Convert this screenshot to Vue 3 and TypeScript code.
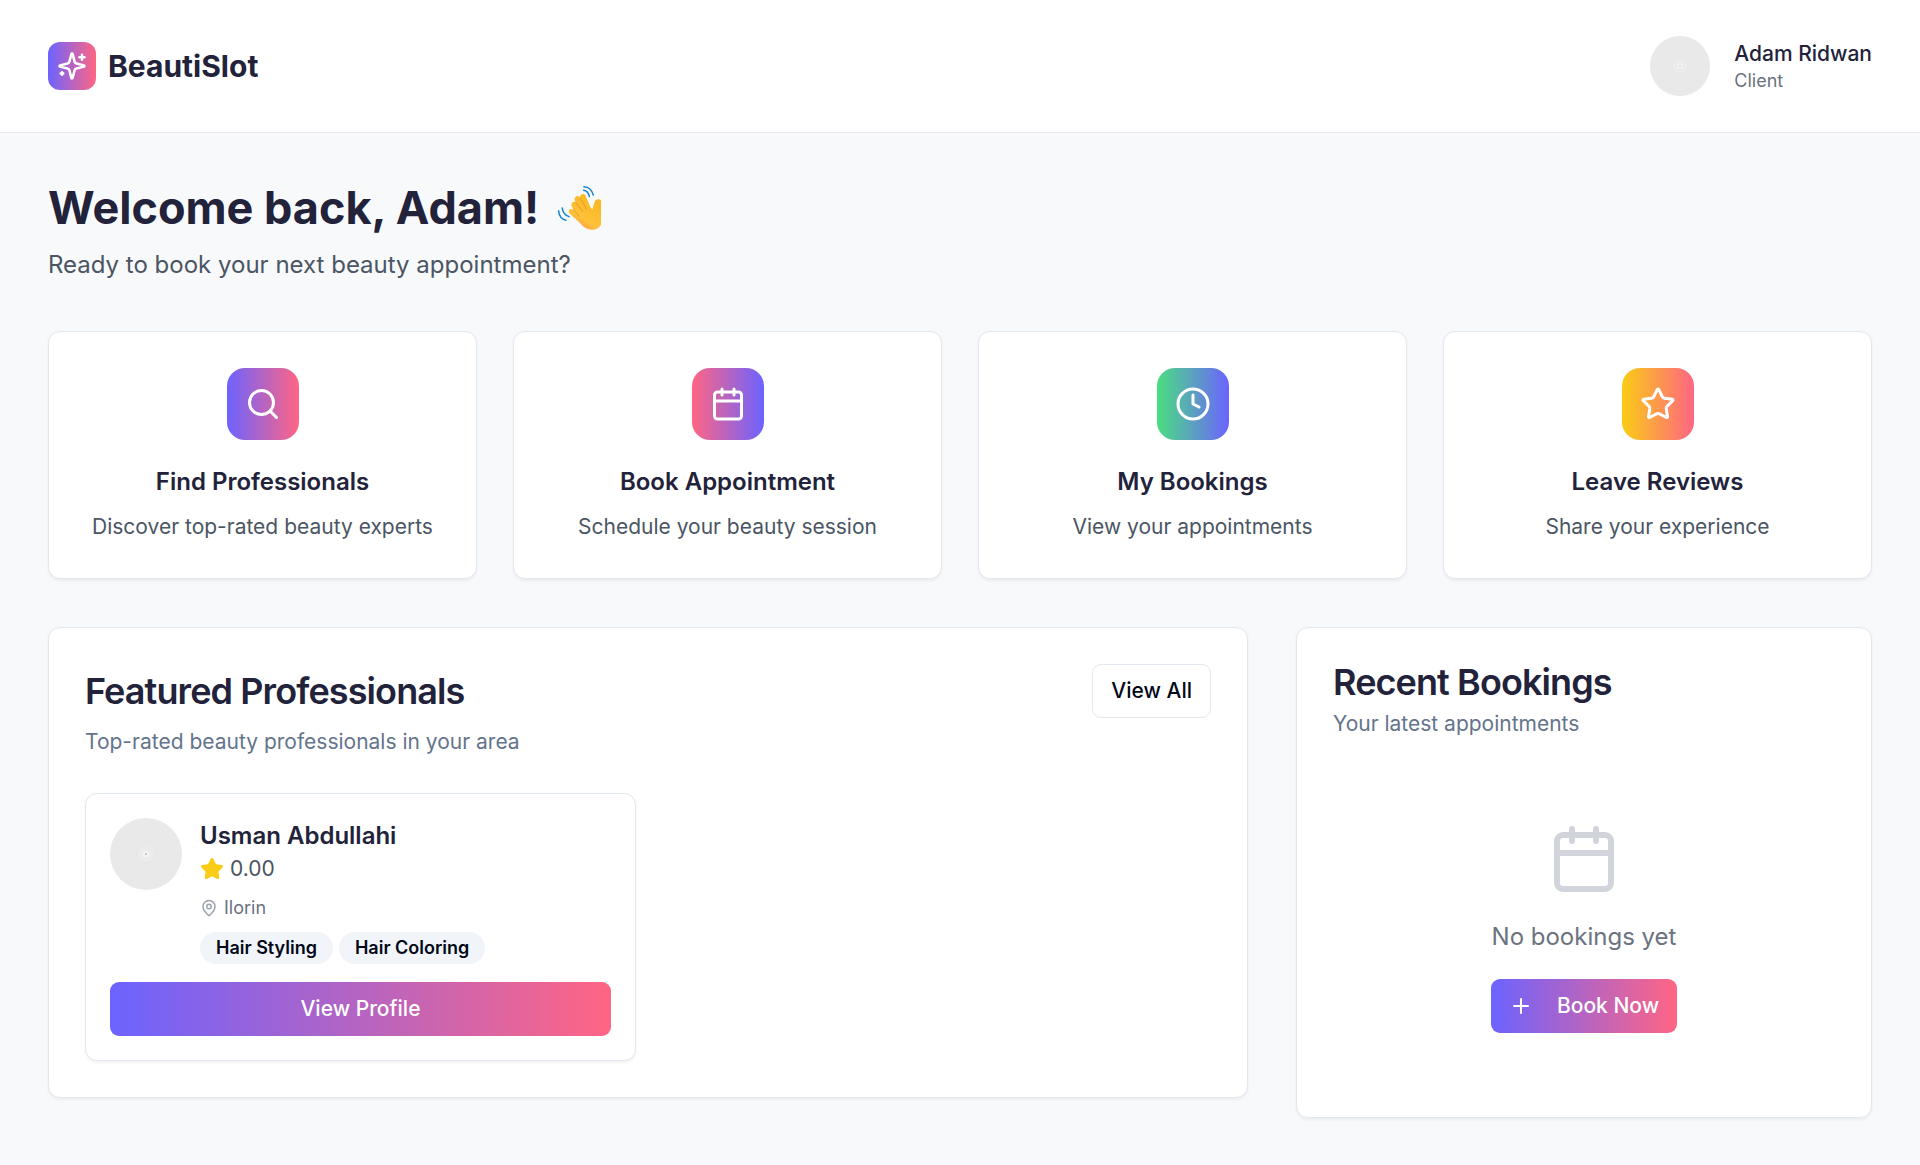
<script setup lang="ts">
type IconName = 'search' | 'calendar' | 'clock' | 'star'

interface Action {
  title: string
  text: string
  icon: IconName
  tone: string
}

const actions: Action[] = [
  { title: 'Find Professionals', text: 'Discover top-rated beauty experts', icon: 'search', tone: 'primary' },
  { title: 'Book Appointment', text: 'Schedule your beauty session', icon: 'calendar', tone: 'reverse' },
  { title: 'My Bookings', text: 'View your appointments', icon: 'clock', tone: 'green' },
  { title: 'Leave Reviews', text: 'Share your experience', icon: 'star', tone: 'yellow' },
]

const starPath =
  'M11.525 2.295a.53.53 0 0 1 .95 0l2.31 4.679a2.123 2.123 0 0 0 1.595 1.16l5.166.756a.53.53 0 0 1 .294.904l-3.736 3.638a2.123 2.123 0 0 0-.611 1.878l.882 5.14a.53.53 0 0 1-.771.56l-4.618-2.428a2.122 2.122 0 0 0-1.973 0L6.396 21.01a.53.53 0 0 1-.77-.56l.881-5.139a2.122 2.122 0 0 0-.611-1.879L2.16 9.795a.53.53 0 0 1 .294-.906l5.165-.755a2.122 2.122 0 0 0 1.597-1.16z'

const icons: Record<IconName, string[]> = {
  search: ['M3 11a8 8 0 1 0 16 0a8 8 0 1 0-16 0', 'm21 21-4.3-4.3'],
  calendar: [
    'M8 2v4',
    'M16 2v4',
    'M5 4h14a2 2 0 0 1 2 2v14a2 2 0 0 1-2 2H5a2 2 0 0 1-2-2V6a2 2 0 0 1 2-2z',
    'M3 10h18',
  ],
  clock: ['M2 12a10 10 0 1 0 20 0a10 10 0 1 0-20 0', 'M12 6v6l4 2'],
  star: [starPath],
}

const services: string[] = ['Hair Styling', 'Hair Coloring']
</script>

<template>
  <div class="page">
    <header class="topbar">
      <div class="brand">
        <span class="logo primary">
          <svg class="icon logo-icon" viewBox="0 0 24 24">
            <path d="M9.937 15.5A2 2 0 0 0 8.5 14.063l-6.135-1.582a.5.5 0 0 1 0-.962L8.5 9.936A2 2 0 0 0 9.937 8.5l1.582-6.135a.5.5 0 0 1 .963 0L14.063 8.5A2 2 0 0 0 15.5 9.937l6.135 1.581a.5.5 0 0 1 0 .964L15.5 14.063a2 2 0 0 0-1.437 1.437l-1.582 6.135a.5.5 0 0 1-.963 0z" />
            <path d="M20 3v4" />
            <path d="M22 5h-4" />
            <path d="M4 17v2" />
            <path d="M5 18H3" />
          </svg>
        </span>
        <span class="brand-name">BeautiSlot</span>
      </div>
      <div class="user">
        <svg class="avatar small" viewBox="0 0 60 60">
          <circle cx="30" cy="30" r="30" fill="#e9e9e9" />
          <circle cx="30" cy="30" r="6.5" fill="#ececec" />
          <circle cx="30" cy="30" r="2.6" fill="#f4f4f4" />
          <circle cx="30" cy="30" r="0.8" fill="#c4c4c4" />
        </svg>
        <div>
          <div class="user-name">Adam Ridwan</div>
          <div class="user-role">Client</div>
        </div>
      </div>
    </header>

    <main class="main">
      <h1 class="welcome">
        <span>Welcome back, Adam!</span>
        <svg class="wave" viewBox="0 0 44 46" role="img" aria-label="Waving hand">
          <defs>
            <linearGradient id="skin" x1="0.75" y1="0.2" x2="0.3" y2="1">
              <stop offset="0" stop-color="#f9b924" />
              <stop offset="0.65" stop-color="#ffc23a" />
              <stop offset="1" stop-color="#fb9149" />
            </linearGradient>
          </defs>
          <path
            fill="url(#skin)"
            d="M12.5 24.5c1.300-1 2.600-.6 4 .4l-1.600-3.400c-1-2 -.4-3.800 1-4.500 1-.5 2-.2 2.800.6l-.8-1.900c-.8-2 0-3.900 1.600-4.500 1.500-.6 2.800.1 3.600 1.500-.3-1.600.4-2.900 1.800-3.400 1.800-.6 3.300.3 4 2.100l4.500 10.600 1.900 2.400 1.800-6.200c.6-2.400 2-3.900 4.200-3.900 2.500 0 4.200 1.500 4.200 4.200V33c0 7.500-4.300 11.800-10.500 11.800-4.500 0-8.500-2.200-11.500-6.200L12.800 28.500c-1.200-1.500-1.500-2.800-.3-4z"
          />
          <path class="finger" d="m16.500 24.800 5.600 6.400M18.700 17.600l7 9M23.200 13l6.500 11.500" />
          <path class="motion" d="M26.900 1.700c4.700.2 8.100 3.400 9.400 8.400M26.500 5.200c3.200.4 5.200 2.700 5.800 6.300M5.200 22.900c.5 4.200 3 7.600 6.900 8.700M1.600 25.700c.4 4.700 3.100 8.500 7.300 9.500" />
        </svg>
      </h1>
      <p class="lead">Ready to book your next beauty appointment?</p>

      <section class="actions">
        <article v-for="action in actions" :key="action.title" class="card action">
          <span class="tile" :class="action.tone">
            <svg class="icon tile-icon" viewBox="0 0 24 24">
              <path v-for="d in icons[action.icon]" :key="d" :d="d" />
            </svg>
          </span>
          <h3 class="action-title">{{ action.title }}</h3>
          <p class="action-text">{{ action.text }}</p>
        </article>
      </section>

      <section class="columns">
        <article class="card panel">
          <div class="panel-head">
            <h2 class="panel-title">Featured Professionals</h2>
            <button class="button outline" type="button">View All</button>
          </div>
          <p class="panel-text">Top-rated beauty professionals in your area</p>
          <div class="pros">
            <div class="card pro">
              <div class="pro-body">
                <svg class="avatar large" viewBox="0 0 72 72">
                  <circle cx="36" cy="36" r="36" fill="#e9e9e9" />
                  <circle cx="36" cy="36" r="7.8" fill="#ececec" />
                  <circle cx="36" cy="36" r="3.1" fill="#f5f5f5" />
                  <circle cx="36" cy="36" r="1" fill="#b8b8b8" />
                </svg>
                <div>
                  <h3 class="pro-name">Usman Abdullahi</h3>
                  <div class="rating">
                    <svg class="icon rating-icon" viewBox="0 0 24 24"><path :d="starPath" /></svg>
                    <span>0.00</span>
                  </div>
                  <div class="place">
                    <svg class="icon place-icon" viewBox="0 0 24 24">
                      <path d="M20 10c0 4.993-5.539 10.193-7.399 11.799a1 1 0 0 1-1.202 0C9.539 20.193 4 14.993 4 10a8 8 0 0 1 16 0" />
                      <circle cx="12" cy="10" r="3" />
                    </svg>
                    <span>Ilorin</span>
                  </div>
                  <div class="badges">
                    <span v-for="service in services" :key="service" class="badge">{{ service }}</span>
                  </div>
                </div>
              </div>
              <button class="button primary wide" type="button">View Profile</button>
            </div>
          </div>
        </article>

        <article class="card panel">
          <h2 class="panel-title">Recent Bookings</h2>
          <p class="panel-text">Your latest appointments</p>
          <div class="empty">
            <svg class="icon empty-icon" viewBox="0 0 24 24">
              <path v-for="d in icons.calendar" :key="d" :d="d" />
            </svg>
            <p class="empty-text">No bookings yet</p>
            <button class="button primary book" type="button">
              <svg class="icon plus-icon" viewBox="0 0 24 24"><path d="M5 12h14" /><path d="M12 5v14" /></svg>
              <span>Book Now</span>
            </button>
          </div>
        </article>
      </section>
    </main>
  </div>
</template>

<style>
body {
  background: #f8f9fb;
}
</style>

<style scoped>
.page {
  background: #f8f9fb;
  color: #22223b;
  font-family: Inter, 'Liberation Sans', sans-serif;
  font-size: 24px;
  line-height: 36px;
}
.page * {
  box-sizing: border-box;
}
h1,
h2,
h3,
p {
  margin: 0;
}
.icon {
  display: block;
  flex: none;
  fill: none;
  stroke: currentColor;
  stroke-width: 2;
  stroke-linecap: round;
  stroke-linejoin: round;
}
.primary {
  background: linear-gradient(to right, #6c63ff, #ff6584);
}
.reverse {
  background: linear-gradient(to right, #ff6584, #6c63ff);
}
.green {
  background: linear-gradient(to right, #4ade80, #6c63ff);
}
.yellow {
  background: linear-gradient(to right, #facc15, #ff6584);
}

.topbar {
  display: flex;
  align-items: center;
  justify-content: space-between;
  height: 133px;
  padding: 0 48px;
  background: #fff;
  border-bottom: 1px solid #e5e7eb;
}
.brand {
  display: flex;
  align-items: center;
  gap: 12px;
}
.logo {
  display: flex;
  align-items: center;
  justify-content: center;
  width: 48px;
  height: 48px;
  border-radius: 12px;
  color: #fff;
}
.logo-icon {
  width: 30px;
  height: 30px;
}
.brand-name {
  font-size: 30px;
  line-height: 42px;
  font-weight: 700;
}
.user {
  display: flex;
  align-items: center;
  gap: 24px;
}
.avatar {
  display: block;
  flex: none;
}
.avatar.small {
  width: 60px;
  height: 60px;
}
.avatar.large {
  width: 72px;
  height: 72px;
}
.user-name {
  font-size: 21px;
  line-height: 30px;
  font-weight: 500;
}
.user-role {
  font-size: 18px;
  line-height: 24px;
  color: #6b7280;
}

.main {
  padding: 48px 48px 36px;
}
.welcome {
  display: flex;
  align-items: center;
  gap: 18px;
  height: 54px;
  font-size: 45px;
  line-height: 54px;
  font-weight: 700;
}
.wave {
  display: block;
  width: 44px;
  height: 46px;
}
.finger {
  fill: none;
  stroke: #e8932d;
  stroke-width: 0.9;
  stroke-linecap: round;
}
.motion {
  fill: none;
  stroke: #1583d0;
  stroke-width: 1.5;
  stroke-linecap: round;
}
.lead {
  margin-top: 12px;
  color: #4b5563;
}

.card {
  background: #fff;
  border: 1px solid #e2e8f0;
  border-radius: 12px;
  box-shadow: 0 1.5px 3px rgba(0, 0, 0, 0.05);
}
.actions {
  display: grid;
  grid-template-columns: repeat(4, 1fr);
  gap: 36px;
  margin-top: 48px;
}
.action {
  display: flex;
  flex-direction: column;
  align-items: center;
  padding: 36px;
  text-align: center;
}
.tile {
  display: flex;
  align-items: center;
  justify-content: center;
  width: 72px;
  height: 72px;
  border-radius: 18px;
  color: #fff;
}
.tile-icon {
  width: 36px;
  height: 36px;
}
.action-title {
  margin-top: 24px;
  font-size: 24px;
  font-weight: 600;
}
.action-text {
  margin-top: 12px;
  font-size: 21px;
  line-height: 30px;
  color: #4b5563;
  white-space: nowrap;
}

.columns {
  display: grid;
  grid-template-columns: 1200px 576px;
  gap: 48px;
  align-items: start;
  margin-top: 48px;
}
.panel {
  padding: 36px;
}
.panel-head {
  display: flex;
  align-items: center;
  justify-content: space-between;
}
.panel-title {
  font-size: 36px;
  line-height: 36px;
  font-weight: 600;
  letter-spacing: -0.9px;
}
.panel-text {
  margin-top: 9px;
  font-size: 21px;
  line-height: 30px;
  color: #64748b;
}
.button {
  display: flex;
  align-items: center;
  justify-content: center;
  height: 54px;
  padding: 0 18px;
  border: 0;
  border-radius: 9px;
  color: #fff;
  font-family: inherit;
  font-size: 21px;
  line-height: 30px;
  font-weight: 500;
}
.button.outline {
  border: 1px solid #e2e8f0;
  background: #fff;
  color: #020817;
}
.button.wide {
  width: 100%;
  margin-top: 18px;
}
.button.book {
  gap: 24px;
  margin-top: 24px;
}
.pros {
  display: grid;
  grid-template-columns: 1fr 1fr;
  gap: 24px;
  margin-top: 36px;
}
.pro {
  padding: 24px;
}
.pro-body {
  display: flex;
  align-items: flex-start;
  gap: 18px;
}
.pro-name {
  font-size: 24px;
  font-weight: 600;
}
.rating {
  display: flex;
  align-items: center;
  gap: 6px;
  font-size: 21px;
  line-height: 30px;
  color: #4b5563;
}
.rating-icon {
  width: 24px;
  height: 24px;
  fill: #facc15;
  stroke: #facc15;
}
.place {
  display: flex;
  align-items: center;
  gap: 6px;
  margin-top: 12px;
  font-size: 18px;
  line-height: 24px;
  color: #6b7280;
}
.place-icon {
  width: 18px;
  height: 18px;
  color: #9ca3af;
}
.badges {
  display: flex;
  gap: 6px;
  margin-top: 12px;
}
.badge {
  padding: 4px 16px;
  border-radius: 16px;
  background: #f1f5f9;
  color: #020817;
  font-size: 18px;
  line-height: 24px;
  font-weight: 600;
}

.empty {
  display: flex;
  flex-direction: column;
  align-items: center;
  margin-top: 36px;
  padding: 48px 0;
}
.empty-icon {
  width: 72px;
  height: 72px;
  color: #d1d5db;
}
.empty-text {
  margin-top: 24px;
  color: #6b7280;
}
.plus-icon {
  width: 24px;
  height: 24px;
}
</style>
